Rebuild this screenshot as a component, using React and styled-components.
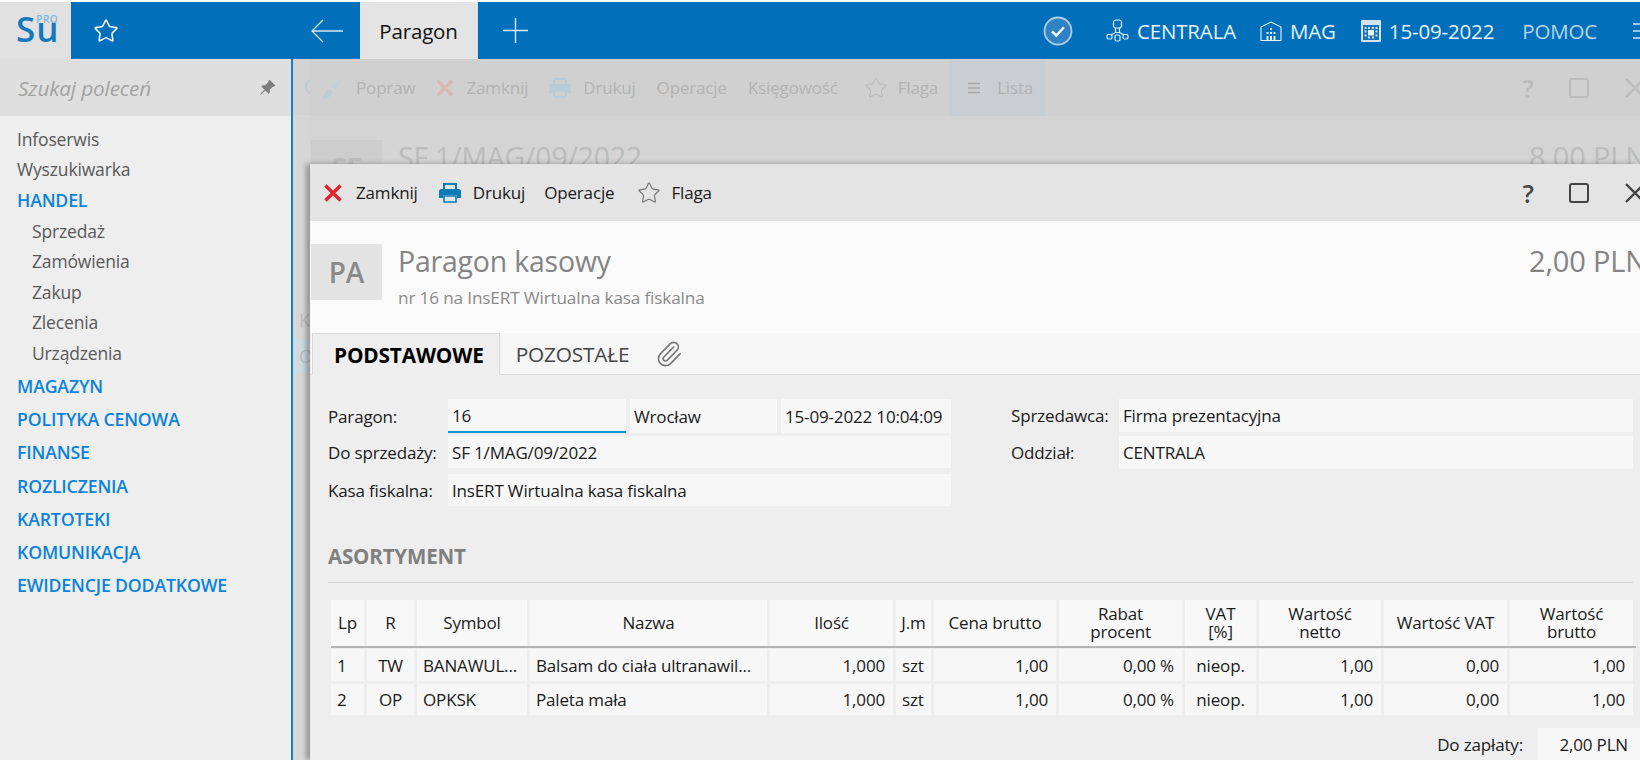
import React from 'react';
import styled, { createGlobalStyle } from 'styled-components';
import { Star, Paperclip, Square } from 'lucide-react';
import { BsPinAngleFill } from 'react-icons/bs';

const GlobalStyle = createGlobalStyle`
  html, body {
    margin: 0;
    padding: 0;
    height: 100%;
    background: #fff;
    overflow: hidden;
  }
  * { box-sizing: border-box; }
  body {
    font-family: "Open Sans", "Noto Sans", "Liberation Sans", sans-serif;
    letter-spacing: -0.01em;
  }
`;

const Page = styled.div`
  width: 1640px;
  height: 760px;
  padding-top: 2px;
  display: flex;
  flex-direction: column;
  overflow: hidden;
`;

/* top bar */
const TopBar = styled.header`
  height: 57px;
  background: #016fb9;
  display: flex;
  align-items: center;
  color: #e6f2fa;
  flex: none;
`;

const LogoBox = styled.div`
  width: 71px;
  height: 57px;
  background: #e1e1e1;
  color: #1279bf;
  display: flex;
  align-items: flex-end;
  padding: 0 0 25px 16px;
  flex: none;
  letter-spacing: 0;
`;

const LogoLetter = styled.span`
  font-size: 35px;
  line-height: 11px;
  font-weight: 600;
`;

const LogoStack = styled.div`
  display: flex;
  flex-direction: column;
  margin-left: 1px;
`;

const LogoPro = styled.span`
  font-size: 10px;
  line-height: 8px;
  font-weight: 600;
  color: #7db6dc;
  letter-spacing: 0.5px;
`;

const TopStar = styled.div`
  margin-left: 22px;
  width: 26px;
  display: flex;
`;

const BackArrow = styled.div`
  margin-left: 192px;
  width: 49px;
  display: flex;
`;

const ActiveTab = styled.div`
  height: 57px;
  width: 118px;
  background: #e4e4e4;
  color: #111;
  font-size: 20.5px;
  font-weight: 500;
  display: flex;
  align-items: center;
  justify-content: center;
  border-right: 1px solid #cfe2ee;
`;

const AddTab = styled.div`
  margin-left: 25px;
  display: flex;
`;

const TopRight = styled.div`
  margin-left: auto;
  display: flex;
  align-items: center;
  margin-right: -9px;
`;

const StatusItem = styled.div`
  display: flex;
  align-items: center;
  gap: 8px;
  font-size: 20.5px;
  margin-left: ${(p) => p.$gap}px;
  color: ${(p) => (p.$muted ? '#b6d5ea' : '#e6f2fa')};
`;

/* layout under the bar */
const Body = styled.div`
  flex: 1;
  display: flex;
  min-height: 0;
`;

const Sidebar = styled.aside`
  width: 293px;
  flex: none;
  background: #eeeeee;
  border-right: 2px solid #1a7fc1;
`;

const SearchRow = styled.div`
  height: 57px;
  background: #dfdfdf;
  display: flex;
  align-items: center;
  justify-content: space-between;
  padding: 0 15px 0 18px;
`;

const SearchHint = styled.span`
  font-size: 20.8px;
  font-style: italic;
  color: #a3a3a3;
`;

const NavList = styled.nav`
  padding-top: 7.5px;
  display: flex;
  flex-direction: column;
`;

const NavItem = styled.a`
  height: 30.4px;
  line-height: 30px;
  font-size: 17.5px;
  color: #595959;
  padding-left: ${(p) => (p.$sub ? 32 : 17)}px;
`;

const NavSection = styled.a`
  height: ${(p) => (p.$tall ? 33.2 : 30.8)}px;
  line-height: 30px;
  margin-top: ${(p) => p.$top || 0}px;
  font-size: 17.7px;
  font-weight: 600;
  color: #0b83d9;
  padding-left: 17px;
`;

const Workspace = styled.main`
  flex: 1;
  position: relative;
  display: flex;
  min-width: 0;
  overflow: hidden;
`;

/* what lies dimmed behind the dialog */
const BackStrip = styled.div`
  width: 17px;
  flex: none;
  background: #d6d6d6;
  color: #bdbdbd;
  font-size: 18px;
  display: flex;
  flex-direction: column;
  overflow: hidden;
`;

const StripTop = styled.div`
  height: 56px;
  background: #d2d2d2;
  display: flex;
  align-items: center;
  padding-left: 12px;
`;

const StripCircle = styled.span`
  width: 16px;
  height: 16px;
  border-radius: 50%;
  border: 2px solid #bccdd6;
  flex: none;
`;

const StripRow = styled.div`
  height: 36px;
  line-height: 36px;
  padding-left: 6px;
  white-space: nowrap;
  background: ${(p) => (p.$selected ? '#cfd9df' : 'transparent')};
  margin-top: ${(p) => p.$top || 0}px;
`;

const BackWindow = styled.div`
  flex: 1;
  min-width: 0;
  background: #d4d4d4;
`;

const Toolbar = styled.div`
  height: 57px;
  display: flex;
  align-items: center;
  padding-left: ${(p) => (p.$back ? 12 : 14)}px;
  font-size: 17px;
  background: ${(p) => (p.$back ? '#d0d0d0' : '#e4e4e4')};
  color: ${(p) => (p.$back ? '#b3b3b3' : '#1a1a1a')};
  flex: none;
`;

const ToolItem = styled.div`
  display: flex;
  align-items: center;
  gap: ${(p) => p.$gap || 12}px;
  margin-right: ${(p) => p.$right || 21}px;
  margin-left: ${(p) => p.$left || 0}px;
  height: 100%;
`;

const ListToggle = styled.div`
  width: 96px;
  height: 56px;
  margin-left: -10px;
  background: #c8ced1;
  display: flex;
  align-items: center;
  gap: 17px;
  padding-left: 19px;
`;

const WindowButtons = styled.div`
  margin-left: auto;
  display: flex;
  align-items: center;
  margin-right: -6px;
  color: ${(p) => (p.$back ? '#bbbbbb' : '#444444')};
`;

const HelpMark = styled.span`
  font-size: 25px;
  font-weight: 600;
  width: 20px;
  text-align: center;
  margin-right: 29px;
`;

const CloseMark = styled.svg`
  width: 22px;
  height: 22px;
  margin-left: 33px;
`;

const BackHead = styled.div`
  display: flex;
  padding-top: 24px;
  height: 49px;
  overflow: hidden;
`;

const DocBadge = styled.div`
  width: 71px;
  height: 56px;
  margin-left: 1px;
  flex: none;
  display: flex;
  align-items: center;
  justify-content: center;
  font-size: 28px;
  font-weight: 600;
  background: ${(p) => (p.$back ? '#cdcdcd' : '#e3e3e3')};
  color: ${(p) => (p.$back ? '#bbbbbb' : '#8a8a8a')};
`;

const DocTitle = styled.div`
  font-size: 28.4px;
  line-height: 34px;
  color: ${(p) => (p.$back ? '#bcbcbc' : '#848484')};
`;

const DocAmount = styled.div`
  margin-left: auto;
  margin-right: -7px;
  font-size: 29px;
  line-height: 34px;
  white-space: nowrap;
  color: ${(p) => (p.$back ? '#bcbcbc' : '#848484')};
`;

/* dialog */
const Dialog = styled.section`
  position: absolute;
  left: 17px;
  right: 0;
  top: 105px;
  bottom: 0;
  background: #eeeeee;
  box-shadow: -4px 0 5px rgba(0, 0, 0, 0.3);
  display: flex;
  flex-direction: column;
`;

const DialogHead = styled.div`
  height: 112px;
  background: #fafafa;
  display: flex;
  padding-top: 23px;
  flex: none;
`;

const TitleBlock = styled.div`
  margin-left: 16px;
  display: flex;
  flex-direction: column;
`;

const DocSub = styled.div`
  margin-top: 8px;
  font-size: 17.2px;
  color: #8a8a8a;
`;

const Tabs = styled.div`
  height: 42px;
  background: #f6f6f6;
  border-bottom: 1px solid #d9d9d9;
  display: flex;
  padding-left: 2px;
  flex: none;
`;

const Tab = styled.div`
  height: ${(p) => (p.$active ? 42 : 41)}px;
  padding: 0 ${(p) => (p.$active ? 15 : 16)}px 0 ${(p) => (p.$active ? 21 : 16)}px;
  display: flex;
  align-items: center;
  font-size: 20.8px;
  font-weight: ${(p) => (p.$active ? 700 : 400)};
  color: ${(p) => (p.$active ? '#000' : '#444')};
  background: ${(p) => (p.$active ? '#eeeeee' : 'transparent')};
  border-top: ${(p) => (p.$active ? '1px solid #d9d9d9' : 'none')};
  border-right: ${(p) => (p.$active ? '1px solid #d9d9d9' : 'none')};
  border-left: ${(p) => (p.$active ? '1px solid #d9d9d9' : 'none')};
`;

const ClipTab = styled.div`
  margin-left: 10px;
  display: flex;
  align-items: center;
  color: #777;
`;

const Form = styled.div`
  padding: 24px 7px 0 18px;
  display: flex;
  gap: 60px;
  font-size: 17px;
  color: #1a1a1a;
  flex: none;
`;

const FormColumn = styled.div`
  width: ${(p) => p.$width}px;
  flex: none;
  display: flex;
  flex-direction: column;
`;

const FormRow = styled.div`
  display: flex;
  align-items: stretch;
  gap: 4px;
  height: ${(p) => p.$height || 32}px;
  margin-top: ${(p) => p.$top || 0}px;
`;

const FieldLabel = styled.div`
  width: ${(p) => p.$width}px;
  flex: none;
  display: flex;
  align-items: center;
  white-space: nowrap;
`;

const Field = styled.div`
  flex: ${(p) => (p.$width ? 'none' : 1)};
  width: ${(p) => (p.$width ? `${p.$width}px` : 'auto')};
  background: #f7f7f7;
  display: flex;
  align-items: center;
  padding-left: 4px;
  white-space: nowrap;
  overflow: hidden;
  border-bottom: ${(p) => (p.$focused ? '2px solid #1296db' : 'none')};
`;

const SectionTitle = styled.h3`
  margin: 38px 7px 0 18px;
  padding-bottom: 14px;
  border-bottom: 1px solid #d5d5d5;
  font-size: 20.5px;
  line-height: 24px;
  font-weight: 700;
  color: #808080;
  flex: none;
`;

const Grid = styled.div`
  margin: 17px 0 0 21px;
  display: grid;
  grid-template-columns: 33px 47px 110px 237px 123px 35px 122px 123px 71px 122px 123px 123px;
  column-gap: 3px;
  font-size: 17px;
  color: #1a1a1a;
  flex: none;
`;

const HeadCell = styled.div`
  height: 48px;
  background: #f8f8f8;
  border-bottom: 2px solid #b4b4b4;
  margin-right: -3px;
  box-shadow: inset -3px 0 0 #efefef;
  padding-right: 3px;
  display: flex;
  align-items: center;
  justify-content: center;
  text-align: center;
  line-height: 18px;
  white-space: pre-line;
  overflow: hidden;
`;

const cellPadding = { left: '0 1px 0 6px', center: '0', right: '0 8px 0 0' };
const cellJustify = { left: 'flex-start', center: 'center', right: 'flex-end' };

const Cell = styled.div`
  height: ${(p) => p.$height}px;
  margin-top: ${(p) => p.$top}px;
  background: #f7f7f7;
  display: flex;
  align-items: center;
  justify-content: ${(p) => cellJustify[p.$align]};
  padding: ${(p) => cellPadding[p.$align]};
  white-space: nowrap;
  overflow: hidden;
`;

const Summary = styled.div`
  margin-top: 13px;
  display: flex;
  justify-content: flex-end;
  font-size: 17px;
  color: #1a1a1a;
  flex: none;
`;

const SummaryLabel = styled.div`
  display: flex;
  align-items: center;
  margin-right: 15px;
`;

const SummaryValue = styled.div`
  width: 102px;
  height: 33px;
  background: #f7f7f7;
  display: flex;
  align-items: center;
  justify-content: flex-end;
  padding-right: 12px;
`;

/* drawn icons */
const ArrowIcon = () => (
  <svg width="32" height="24" viewBox="0 0 32 24" fill="none" stroke="#d5e7f4" strokeWidth="1.3">
    <path d="M32 12H1M12 1 1 12l11 11" />
  </svg>
);

const PlusIcon = () => (
  <svg width="25" height="25" viewBox="0 0 25 25" stroke="#dcebf6" strokeWidth="1.4">
    <path d="M12.5 0v25M0 12.500h25" />
  </svg>
);

const CheckBadge = () => (
  <svg width="30" height="30" viewBox="0 0 30 30" fill="none">
    <circle cx="15" cy="15" r="13.5" fill="#2f83c2" stroke="#a9cfe9" strokeWidth="1.8" />
    <path d="M9 15.500l4.300 4 7.700-8.300" stroke="#f2f8fc" strokeWidth="2.4" />
  </svg>
);

const NetworkIcon = () => (
  <svg width="23" height="23" viewBox="0 0 23 23" fill="none" stroke="#e6f2fa" strokeWidth="1.2">
    <rect x="7.5" y="1" width="8" height="8" rx="2.5" />
    <path d="M9.5 9v4.500h4V9M9.500 13.500 5 16M13.500 13.500 18 16" />
    <rect x="1" y="15.5" width="5" height="4.5" rx="1.5" />
    <rect x="9" y="16" width="5" height="6" rx="1.5" />
    <rect x="17" y="15.5" width="5" height="4.5" rx="1.5" />
  </svg>
);

const BuildingIcon = () => (
  <svg width="22" height="20" viewBox="0 0 22 20" fill="none" stroke="#e6f2fa" strokeWidth="1.1">
    <path d="M1 19.500V6L11 1l10 5v13.500z" />
    <path
      d="M10 7h2v2h-2zM6.500 11h2v2h-2zM10 11h2v2h-2zM13.500 11h2v2h-2zM6.500 15h2v4h-2zM10 15h2v4h-2zM13.500 15h2v4h-2z"
      fill="#e6f2fa"
      stroke="none"
    />
  </svg>
);

const CalendarIcon = () => (
  <svg width="20" height="22" viewBox="0 0 20 22">
    <rect width="20" height="22" rx="1" fill="#cfe3f1" />
    <rect x="2" y="5" width="16" height="15" fill="#1b73b3" />
    <path
      d="M3.500 7h2v2h-2zM7 7h2v2H7zM11 7h2v2h-2zM14.500 7h2v2h-2zM3.500 10.500h2v2h-2zM14.500 10.500h2v2h-2zM3.500 14.500h2v2h-2zM14.500 14.500h2v2h-2zM7 16.500h2v2H7zM11 16.500h2v2h-2z"
      fill="#cfe3f1"
    />
    <rect x="7" y="10" width="6" height="5.5" fill="#eaf3f9" />
  </svg>
);

const HamburgerIcon = () => (
  <svg width="16" height="16" viewBox="0 0 16 16" stroke="#cfe3f1" strokeWidth="1.4">
    <path d="M0 1h16M0 8h16M0 15h16" />
  </svg>
);

const CrossIcon = ({ color }) => (
  <svg width="18" height="18" viewBox="0 0 18 18" stroke={color} strokeWidth="3.4">
    <path d="M1.500 1.500l15 15M16.500 1.500l-15 15" />
  </svg>
);

const PrinterIcon = ({ color, paper }) => (
  <svg width="22" height="20" viewBox="0 0 22 20">
    <path d="M5 1h12v6H5z" fill="none" stroke={color} strokeWidth="2" />
    <path d="M2.500 6h17A2.500 2.500 0 0 1 22 8.500V15h-4v-3H4v3H0V8.500A2.500 2.500 0 0 1 2.500 6z" fill={color} />
    <path d="M5 13h12v6H5z" fill={paper} stroke={color} strokeWidth="1.6" />
  </svg>
);

const BrushIcon = () => (
  <svg width="22" height="22" viewBox="0 0 22 22">
    <path d="M22 0 9 9.500l3 3z" fill="#c0d2da" />
    <path d="M7.500 11.500l3 3C10 19 5 22 0 21.500c3-2 2-8 7.500-10z" fill="#bccdd6" />
  </svg>
);

const ListIcon = () => (
  <svg width="12" height="12" viewBox="0 0 12 12" stroke="#a8a8a8" strokeWidth="1.3">
    <path d="M0 1.500h12M0 6h12M0 10.500h12" />
  </svg>
);

const CloseGlyph = ({ color }) => (
  <CloseMark viewBox="0 0 22 22" stroke={color} strokeWidth="2.4">
    <path d="M2 2l18 18M20 2 2 20" />
  </CloseMark>
);

const topLevel = ['MAGAZYN', 'POLITYKA CENOWA', 'FINANSE', 'ROZLICZENIA', 'KARTOTEKI', 'KOMUNIKACJA', 'EWIDENCJE DODATKOWE'];
const handelItems = ['Sprzedaż', 'Zamówienia', 'Zakup', 'Zlecenia', 'Urządzenia'];

const columns = [
  { title: 'Lp' },
  { title: 'R' },
  { title: 'Symbol' },
  { title: 'Nazwa' },
  { title: 'Ilość' },
  { title: 'J.m' },
  { title: 'Cena brutto' },
  { title: 'Rabat\nprocent' },
  { title: 'VAT\n[%]' },
  { title: 'Wartość\nnetto' },
  { title: 'Wartość VAT' },
  { title: 'Wartość\nbrutto' },
];

const aligns = ['left', 'center', 'left', 'left', 'right', 'left', 'right', 'right', 'center', 'right', 'right', 'right'];

const rows = [
  ['1', 'TW', 'BANAWUL...', 'Balsam do ciała ultranawil...', '1,000', 'szt', '1,00', '0,00 %', 'nieop.', '1,00', '0,00', '1,00'],
  ['2', 'OP', 'OPKSK', 'Paleta mała', '1,000', 'szt', '1,00', '0,00 %', 'nieop.', '1,00', '0,00', '1,00'],
];

const App = () => {
  return (
    <Page>
      <GlobalStyle />
      <TopBar>
        <LogoBox>
          <LogoLetter>S</LogoLetter>
          <LogoStack>
            <LogoPro>PRO</LogoPro>
            <LogoLetter>u</LogoLetter>
          </LogoStack>
        </LogoBox>
        <TopStar>
          <Star size={26} strokeWidth={1.5} color="#eef6fb" />
        </TopStar>
        <BackArrow>
          <ArrowIcon />
        </BackArrow>
        <ActiveTab>Paragon</ActiveTab>
        <AddTab>
          <PlusIcon />
        </AddTab>
        <TopRight>
          <CheckBadge />
          <StatusItem $gap={33}>
            <NetworkIcon />
            CENTRALA
          </StatusItem>
          <StatusItem $gap={24}>
            <BuildingIcon />
            MAG
          </StatusItem>
          <StatusItem $gap={25}>
            <CalendarIcon />
            15-09-2022
          </StatusItem>
          <StatusItem $gap={28} $muted>
            POMOC
          </StatusItem>
          <StatusItem $gap={36}>
            <HamburgerIcon />
          </StatusItem>
        </TopRight>
      </TopBar>

      <Body>
        <Sidebar>
          <SearchRow>
            <SearchHint>Szukaj poleceń</SearchHint>
            <BsPinAngleFill size={17} color="#7c7c7c" />
          </SearchRow>
          <NavList>
            <NavItem>Infoserwis</NavItem>
            <NavItem>Wyszukiwarka</NavItem>
            <NavSection $top={1}>HANDEL</NavSection>
            {handelItems.map((item) => (
              <NavItem $sub key={item}>
                {item}
              </NavItem>
            ))}
            {topLevel.map((item, index) => (
              <NavSection $tall $top={index === 0 ? 3 : 0} key={item}>
                {item}
              </NavSection>
            ))}
          </NavList>
        </Sidebar>

        <Workspace>
          <BackStrip>
            <StripTop>
              <StripCircle />
            </StripTop>
            <StripRow $top={187}>K</StripRow>
            <StripRow $selected>O.</StripRow>
          </BackStrip>

          <BackWindow>
            <Toolbar $back>
              <ToolItem>
                <BrushIcon />
                Popraw
              </ToolItem>
              <ToolItem>
                <CrossIcon color="#d9b7b7" />
                Zamknij
              </ToolItem>
              <ToolItem>
                <PrinterIcon color="#b6ccd7" paper="#d0d0d0" />
                Drukuj
              </ToolItem>
              <ToolItem>Operacje</ToolItem>
              <ToolItem>Księgowość</ToolItem>
              <ToolItem $gap={10} $left={5}>
                <Star size={24} strokeWidth={1.2} color="#bcbcbc" />
                Flaga
              </ToolItem>
              <ListToggle>
                <ListIcon />
                Lista
              </ListToggle>
              <WindowButtons $back>
                <HelpMark>?</HelpMark>
                <Square size={24} strokeWidth={2} />
                <CloseGlyph color="#bbbbbb" />
              </WindowButtons>
            </Toolbar>
            <BackHead>
              <DocBadge $back>SF</DocBadge>
              <TitleBlock>
                <DocTitle $back>SF 1/MAG/09/2022</DocTitle>
              </TitleBlock>
              <DocAmount $back>8,00 PLN</DocAmount>
            </BackHead>
          </BackWindow>

          <Dialog>
            <Toolbar>
              <ToolItem $gap={14}>
                <CrossIcon color="#e2232e" />
                Zamknij
              </ToolItem>
              <ToolItem>
                <PrinterIcon color="#0b7ab8" paper="#e4e4e4" />
                Drukuj
              </ToolItem>
              <ToolItem $left={-2} $right={23}>
                Operacje
              </ToolItem>
              <ToolItem $gap={10}>
                <Star size={24} strokeWidth={1.2} color="#777777" />
                Flaga
              </ToolItem>
              <WindowButtons>
                <HelpMark>?</HelpMark>
                <Square size={24} strokeWidth={2} />
                <CloseGlyph color="#444444" />
              </WindowButtons>
            </Toolbar>

            <DialogHead>
              <DocBadge>PA</DocBadge>
              <TitleBlock>
                <DocTitle>Paragon kasowy</DocTitle>
                <DocSub>nr 16 na InsERT Wirtualna kasa fiskalna</DocSub>
              </TitleBlock>
              <DocAmount>2,00 PLN</DocAmount>
            </DialogHead>

            <Tabs>
              <Tab $active>PODSTAWOWE</Tab>
              <Tab>POZOSTAŁE</Tab>
              <ClipTab>
                <Paperclip size={28} strokeWidth={1.4} />
              </ClipTab>
            </Tabs>

            <Form>
              <FormColumn $width={623}>
                <FormRow $height={34}>
                  <FieldLabel $width={116}>Paragon:</FieldLabel>
                  <Field $width={178} $focused>
                    16
                  </Field>
                  <Field $width={147}>Wrocław</Field>
                  <Field>15-09-2022 10:04:09</Field>
                </FormRow>
                <FormRow $top={3}>
                  <FieldLabel $width={116}>Do sprzedaży:</FieldLabel>
                  <Field>SF 1/MAG/09/2022</Field>
                </FormRow>
                <FormRow $top={6}>
                  <FieldLabel $width={116}>Kasa fiskalna:</FieldLabel>
                  <Field>InsERT Wirtualna kasa fiskalna</Field>
                </FormRow>
              </FormColumn>
              <FormColumn $width={622}>
                <FormRow $height={33}>
                  <FieldLabel $width={104}>Sprzedawca:</FieldLabel>
                  <Field>Firma prezentacyjna</Field>
                </FormRow>
                <FormRow $top={4} $height={33}>
                  <FieldLabel $width={104}>Oddział:</FieldLabel>
                  <Field>CENTRALA</Field>
                </FormRow>
              </FormColumn>
            </Form>

            <SectionTitle>ASORTYMENT</SectionTitle>

            <Grid>
              {columns.map((col) => (
                <HeadCell key={col.title}>{col.title}</HeadCell>
              ))}
              {rows.map((row, r) =>
                row.map((value, c) => (
                  <Cell key={`${r}-${c}`} $align={aligns[c]} $height={r === 0 ? 32 : 31} $top={r === 0 ? 1 : 3}>
                    {value}
                  </Cell>
                ))
              )}
            </Grid>

            <Summary>
              <SummaryLabel>Do zapłaty:</SummaryLabel>
              <SummaryValue>2,00 PLN</SummaryValue>
            </Summary>
          </Dialog>
        </Workspace>
      </Body>
    </Page>
  );
};

export default App;
